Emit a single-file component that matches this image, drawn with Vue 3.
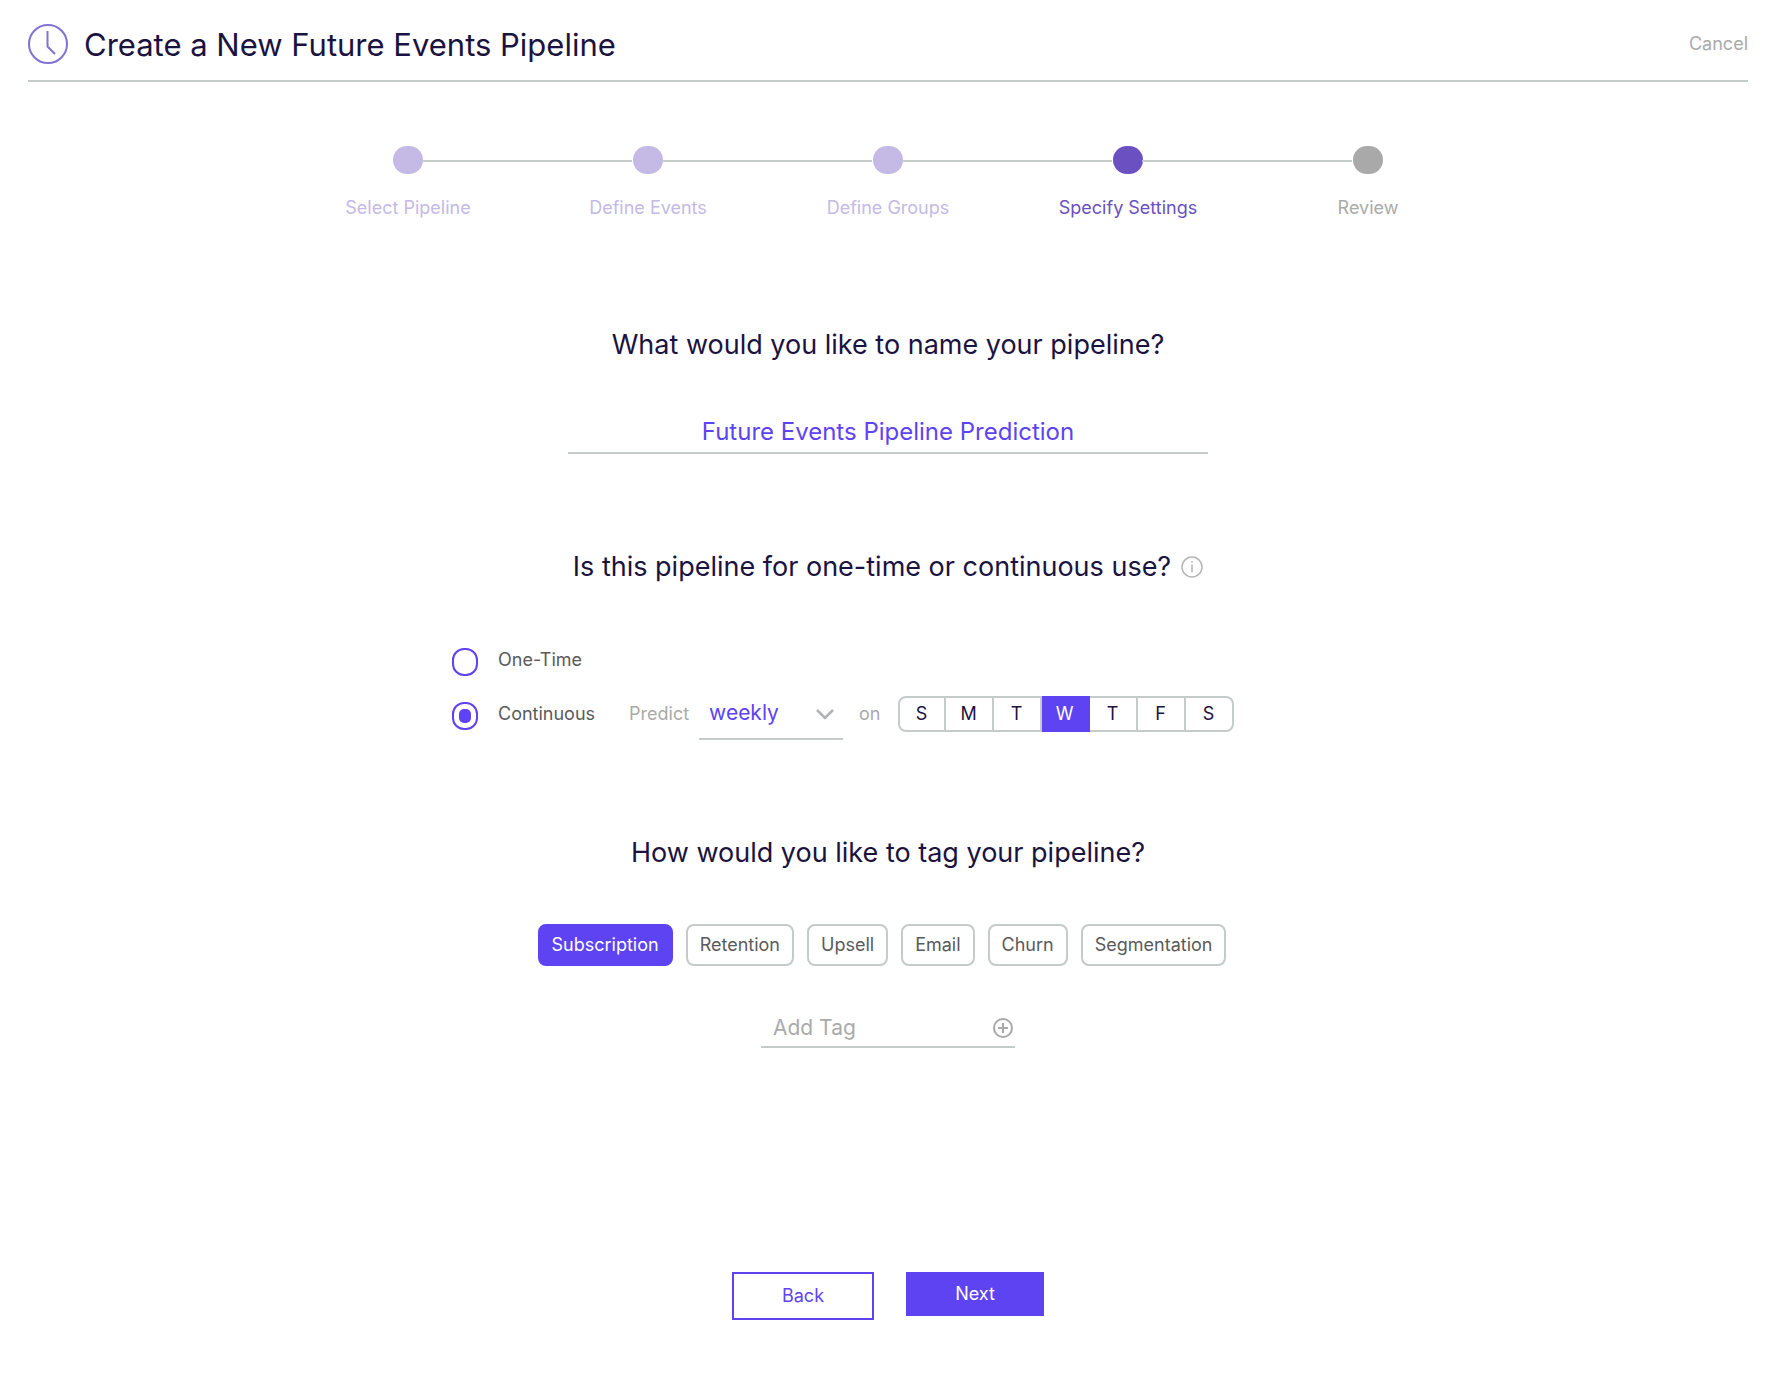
<script setup>
import { ref } from 'vue'

const steps = [
  { label: 'Select Pipeline', state: 'done' },
  { label: 'Define Events', state: 'done' },
  { label: 'Define Groups', state: 'done' },
  { label: 'Specify Settings', state: 'active' },
  { label: 'Review', state: 'todo' },
]
const name = ref('Future Events Pipeline Prediction')
const usage = ref('continuous')
const frequency = ref('weekly')
const days = ['S', 'M', 'T', 'W', 'T', 'F', 'S']
const dayNames = ['Sunday', 'Monday', 'Tuesday', 'Wednesday', 'Thursday', 'Friday', 'Saturday']
const day = ref(3)
const tags = ref(['Subscription', 'Retention', 'Upsell', 'Email', 'Churn', 'Segmentation'])
const tag = ref('Subscription')
const newTag = ref('')

function addTag() {
  const value = newTag.value.trim()
  if (value) tags.value.push(value)
  newTag.value = ''
}
</script>

<template>
  <div class="page">
    <header class="header">
      <svg class="clock" viewBox="0 0 40 40" aria-hidden="true">
        <circle cx="20" cy="20" r="19" />
        <path d="M19.5 7v15.5l7.5 7.5" />
      </svg>
      <h1>Create a New Future Events Pipeline</h1>
      <a class="cancel" href="#">Cancel</a>
    </header>

    <ol class="steps">
      <li v-for="s in steps" :key="s.label" class="step" :class="s.state">
        <span class="dot"></span>
        <span class="step-label">{{ s.label }}</span>
      </li>
    </ol>

    <main>
      <section class="name-section">
        <h2><label for="pipeline-name">What would you like to name your pipeline?</label></h2>
        <input id="pipeline-name" v-model="name" class="name-input" type="text" />
      </section>

      <section class="use-section">
        <h2>
          Is this pipeline for one-time or continuous use?
          <svg class="info" viewBox="0 0 22 22" aria-hidden="true">
            <circle cx="11" cy="11" r="10" />
            <path d="M11 8.6v7.6M11 5.2v1.6" />
          </svg>
        </h2>
        <div class="options">
          <label class="option">
            <input v-model="usage" type="radio" name="usage" value="once" />
            One-Time
          </label>
          <div class="option-row">
            <label class="option">
              <input v-model="usage" type="radio" name="usage" value="continuous" />
              Continuous
            </label>
            <label class="muted predict" for="frequency">Predict</label>
            <span class="select">
              <select id="frequency" v-model="frequency">
                <option>daily</option>
                <option>weekly</option>
                <option>monthly</option>
              </select>
              <svg viewBox="0 0 20 12" aria-hidden="true"><path d="M2 2l8 8 8-8" /></svg>
            </span>
            <span class="muted on">on</span>
            <div class="days" role="group" aria-label="Day of the week">
              <button
                v-for="(d, i) in days"
                :key="i"
                type="button"
                :class="{ selected: i === day }"
                :aria-label="dayNames[i]"
                :aria-pressed="i === day"
                @click="day = i"
              >{{ d }}</button>
            </div>
          </div>
        </div>
      </section>

      <section class="tag-section">
        <h2>How would you like to tag your pipeline?</h2>
        <div class="tags">
          <button
            v-for="t in tags"
            :key="t"
            type="button"
            :class="{ selected: t === tag }"
            :aria-pressed="t === tag"
            @click="tag = t"
          >{{ t }}</button>
        </div>
        <form class="add-tag" @submit.prevent="addTag">
          <input v-model="newTag" type="text" placeholder="Add Tag" aria-label="Add Tag" />
          <button type="submit" aria-label="Add">
            <svg viewBox="0 0 20 20" aria-hidden="true">
              <circle cx="10" cy="10" r="9" />
              <path d="M10 5v10M5 10h10" />
            </svg>
          </button>
        </form>
      </section>
    </main>

    <footer class="actions">
      <button type="button" class="back">Back</button>
      <button type="button" class="next">Next</button>
    </footer>
  </div>
</template>

<style>
body {
  margin: 0;
  background: #fff;
}
</style>

<style scoped>
.page {
  --ink: #1b133f;
  --purple: #5e43f3;
  --line: #c5caca;
  --muted: #aaa;
  --text: #5a5a5a;
  box-sizing: border-box;
  padding: 0 30px 58px 28px;
  font-family: Inter, "Liberation Sans", sans-serif;
  font-size: 18px;
  line-height: 24px;
  color: var(--text);
}
.page *,
.page *::before {
  box-sizing: border-box;
}
button,
input,
select {
  margin: 0;
  padding: 0;
  border: 0;
  background: none;
  font: inherit;
  color: inherit;
}
button {
  cursor: pointer;
}
svg {
  display: block;
  fill: none;
  stroke-width: 2;
}

.header {
  display: flex;
  align-items: center;
  height: 82px;
  padding-top: 8px;
  border-bottom: 2px solid var(--line);
}
.clock {
  width: 40px;
  height: 40px;
  stroke: #8371d3;
}
h1 {
  flex: 1;
  margin: 2px 0 0 16px;
  font-size: 31px;
  line-height: 40px;
  font-weight: 400;
  color: var(--ink);
}
.cancel {
  color: var(--muted);
  text-decoration: none;
}

.steps {
  display: grid;
  grid-template-columns: repeat(5, 1fr);
  max-width: 1200px;
  margin: 64px auto 0;
  padding: 0;
  list-style: none;
}
.step {
  position: relative;
  display: flex;
  flex-direction: column;
  align-items: center;
  gap: 22px;
  color: var(--muted);
}
.step + .step::before {
  content: "";
  position: absolute;
  top: 14px;
  right: calc(50% + 16px);
  width: calc(100% - 30px);
  height: 2px;
  background: var(--line);
}
.dot {
  width: 30px;
  height: 28px;
  border-radius: 14px;
  background: #a9a9a9;
}
.done {
  color: #c5b9e6;
}
.done .dot {
  background: #c5b9e6;
}
.active {
  color: #6b50c1;
}
.active .dot {
  background: #6b50c1;
}

section {
  display: flex;
  flex-direction: column;
  align-items: center;
}
h2 {
  display: flex;
  align-items: center;
  gap: 10px;
  margin: 0;
  font-size: 27px;
  line-height: 40px;
  font-weight: 400;
  color: var(--ink);
}

.name-section {
  margin-top: 105px;
}
.name-input {
  width: 100%;
  max-width: 640px;
  height: 48px;
  margin-top: 41px;
  padding-top: 4px;
  border-bottom: 2px solid var(--line);
  border-radius: 0;
  font-size: 24px;
  text-align: center;
  color: var(--purple);
}

.use-section {
  margin-top: 93px;
}
.info {
  width: 22px;
  height: 22px;
  stroke: #b4b4b4;
  stroke-width: 1.5;
}
.options {
  display: flex;
  flex-direction: column;
  align-items: flex-start;
  gap: 12px;
  width: 100%;
  max-width: 872px;
  margin-top: 57px;
}
.option {
  display: flex;
  align-items: center;
  gap: 20px;
}
.option input {
  display: grid;
  place-items: center;
  appearance: none;
  width: 26px;
  height: 28px;
  margin-top: 4px;
  border: 2px solid var(--purple);
  border-radius: 12px;
}
.option input:checked::before {
  content: "";
  width: 12px;
  height: 14px;
  border-radius: 5px;
  background: var(--purple);
}
.option-row {
  display: flex;
  align-items: center;
  height: 52px;
}
.muted {
  color: var(--muted);
}
.predict {
  margin-left: 34px;
}
.select {
  position: relative;
  width: 144px;
  margin-left: 10px;
}
.select select {
  display: block;
  appearance: none;
  width: 100%;
  height: 52px;
  padding: 0 32px 0 10px;
  border-bottom: 2px solid var(--line);
  border-radius: 0;
  font-size: 21px;
  color: var(--purple);
}
.select option {
  color: var(--text);
}
.select svg {
  position: absolute;
  right: 8px;
  top: 20px;
  width: 20px;
  height: 12px;
  stroke: #b0b3b6;
  stroke-width: 2.5;
  pointer-events: none;
}
.on {
  margin: 0 17px 0 16px;
}
.days {
  display: flex;
}
.days button {
  width: 48px;
  height: 36px;
  border: 2px solid var(--line);
  border-left-width: 0;
  color: var(--ink);
}
.days button:first-child {
  border-left-width: 2px;
  border-radius: 8px 0 0 8px;
}
.days button:last-child {
  border-radius: 0 8px 8px 0;
}
.days button.selected {
  border-color: var(--purple);
  background: var(--purple);
  color: #fff;
}

.tag-section {
  margin-top: 93px;
}
.tags {
  display: flex;
  flex-wrap: wrap;
  justify-content: center;
  gap: 13px;
  margin: 51px 12px 0 0;
}
.tags button {
  height: 42px;
  padding: 0 12px;
  border: 2px solid var(--line);
  border-radius: 8px;
}
.tags button.selected {
  border-color: var(--purple);
  background: var(--purple);
  color: #fff;
}
.add-tag {
  display: flex;
  align-items: center;
  width: 254px;
  height: 38px;
  margin-top: 44px;
  padding: 0 2px 0 12px;
  border-bottom: 2px solid var(--line);
}
.add-tag input {
  flex: 1;
  min-width: 0;
  font-size: 21px;
}
.add-tag input::placeholder {
  color: var(--muted);
  opacity: 1;
}
.add-tag svg {
  width: 20px;
  height: 20px;
  stroke: #a9a9a9;
}

.actions {
  display: flex;
  justify-content: center;
  align-items: flex-start;
  gap: 32px;
  margin-top: 224px;
}
.back {
  width: 142px;
  height: 48px;
  border: 2px solid var(--purple);
  color: var(--purple);
}
.next {
  width: 138px;
  height: 44px;
  background: var(--purple);
  color: #fff;
}
</style>
